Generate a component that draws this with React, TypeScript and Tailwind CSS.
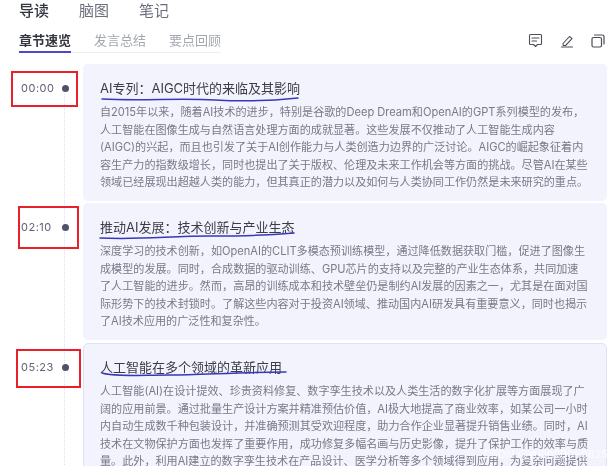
const FONT = "[font-family:Inter,'Noto_Sans_CJK_SC',sans-serif]";

const CHAPTERS = [
  {
    time: "00:00",
    title: "AI专列：AIGC时代的来临及其影响",
    lines: [
      "自2015年以来，随着AI技术的进步，特别是谷歌的Deep Dream和OpenAI的GPT系列模型的发布，",
      "人工智能在图像生成与自然语言处理方面的成就显著。这些发展不仅推动了人工智能生成内容",
      "(AIGC)的兴起，而且也引发了关于AI创作能力与人类创造力边界的广泛讨论。AIGC的崛起象征着内",
      "容生产力的指数级增长，同时也提出了关于版权、伦理及未来工作机会等方面的挑战。尽管AI在某些",
      "领域已经展现出超越人类的能力，但其真正的潜力以及如何与人类协同工作仍然是未来研究的重点。",
    ],
  },
  {
    time: "02:10",
    title: "推动AI发展：技术创新与产业生态",
    lines: [
      "深度学习的技术创新，如OpenAI的CLIT多模态预训练模型，通过降低数据获取门槛，促进了图像生",
      "成模型的发展。同时，合成数据的驱动训练、GPU芯片的支持以及完整的产业生态体系，共同加速",
      "了人工智能的进步。然而，高昂的训练成本和技术壁垒仍是制约AI发展的因素之一，尤其是在面对国",
      "际形势下的技术封锁时。了解这些内容对于投资AI领域、推动国内AI研发具有重要意义，同时也揭示",
      "了AI技术应用的广泛性和复杂性。",
    ],
  },
  {
    time: "05:23",
    title: "人工智能在多个领域的革新应用",
    lines: [
      "人工智能(AI)在设计提效、珍贵资料修复、数字孪生技术以及人类生活的数字化扩展等方面展现了广",
      "阔的应用前景。通过批量生产设计方案并精准预估价值，AI极大地提高了商业效率，如某公司一小时",
      "内自动生成数千种包装设计，并准确预测其受欢迎程度，助力合作企业显著提升销售业绩。同时，AI",
      "技术在文物保护方面也发挥了重要作用，成功修复多幅名画与历史影像，提升了保护工作的效率与质",
      "量。此外，利用AI建立的数字孪生技术在产品设计、医学分析等多个领域得到应用，为复杂问题提供",
    ],
  },
];

function CommentIcon() {
  return (
    <svg width="15" height="15" viewBox="0 0 15 15" fill="none" stroke="currentColor" strokeWidth="1.1" strokeLinejoin="round">
      <path d="M2.5 1.5h10a1 1 0 0 1 1 1v8a1 1 0 0 1-1 1H9.5L7.5 13.5 5.5 11.5h-3a1 1 0 0 1-1-1v-8a1 1 0 0 1 1-1Z" />
      <path d="M4 5h7M4 8h4.5" strokeLinecap="round" />
    </svg>
  );
}

function PenIcon() {
  return (
    <svg width="14" height="14" viewBox="0 0 14 14" fill="none" stroke="currentColor" strokeWidth="1.1" strokeLinejoin="round">
      <path d="M3 9.5 9.5 2.5l2.5 2.2-6.4 6.8H3.2Z" />
      <path d="M1.5 13h11" strokeLinecap="round" />
    </svg>
  );
}

function CopyIcon() {
  return (
    <svg width="14" height="14" viewBox="0 0 14 14" fill="none" stroke="currentColor" strokeWidth="1.2" strokeLinejoin="round">
      <rect x="1" y="3.5" width="9.5" height="9.5" rx="1.5" />
      <path d="M3.5 1h8a1.5 1.5 0 0 1 1.5 1.5V10" strokeLinecap="round" />
    </svg>
  );
}

export default function App() {
  return (
    <div className={`relative h-[466px] w-[609px] overflow-hidden bg-white blur-[0.4px] ${FONT}`}>
      {/* Top tabs */}
      <div className="flex h-[20px] items-center gap-[30px] pl-[19px] pt-[1px] text-[15px] leading-[20px] text-[#6b6f7b]">
        <span className="font-medium text-[#33363f]">导读</span>
        <span>脑图</span>
        <span>笔记</span>
      </div>

      {/* Sub tabs */}
      <div className="mt-[10px] flex h-[23px] items-start justify-between pr-[4px]">
        <div className="ml-[19px] flex w-[202px] gap-[23px] border-b border-[#eeeef2] text-[13px] leading-[20px] text-[#a4a7b0]">
          <span className="-mb-px h-[23px] border-b-[2px] border-[#4a4acb] font-semibold text-[#33363f]">章节速览</span>
          <span>发言总结</span>
          <span>要点回顾</span>
        </div>
        <div className="mt-[3px] flex items-center gap-[17px] text-[#4b4e57]">
          <CommentIcon />
          <PenIcon />
          <CopyIcon />
        </div>
      </div>

      {/* Timeline */}
      <div className="relative mt-[11px] flex flex-col gap-[2px]">
        <div className="absolute bottom-0 left-[64px] top-[30px] border-l border-dotted border-[#dddcf5]" />
        {CHAPTERS.map((chapter, index) => (
          <div key={chapter.time} className={`flex ${index === 2 ? "mt-px" : ""}`}>
            <div className="flex w-[83px] shrink-0 items-start">
              <div className="z-10 mt-[17px] flex w-[69px] items-center justify-between pl-[21px] text-[11px] leading-[14px] tracking-[0.5px] text-[#5f6272]">
                <span>{chapter.time}</span>
                <span className="h-[7px] w-[7px] rounded-full bg-[#50526b]" />
              </div>
            </div>
            <div
              className={`w-[524px] shrink-0 rounded-[5px] bg-[#f3f3fe] ${
                index === 2 ? "h-[180px] border border-[#dfdff8] pl-[16px] pt-[13px]" : "h-[137px] pl-[17px] pt-[14px]"
              }`}
            >
              <h3 className="text-[13px] leading-[20px] text-[#3a3c47]">{chapter.title}</h3>
              <div className="mt-[6px] text-[11.1px] leading-[17.5px] text-[#787a86]">
                {chapter.lines.map((line) => (
                  <div key={line} className="whitespace-nowrap">
                    {line}
                  </div>
                ))}
              </div>
            </div>
          </div>
        ))}
      </div>

      {/* Hand-drawn annotations */}
      <div className="absolute left-[11px] top-[71px] h-[36px] w-[67px] border-[2px] border-[#e8202a]" />
      <div className="absolute left-[18px] top-[206px] h-[43px] w-[61px] border-[2px] border-[#e8202a]" />
      <div className="absolute left-[16px] top-[349px] h-[39px] w-[65px] border-[2px] border-[#e8202a]" />
      <svg className="absolute left-0 top-0" width="609" height="466" fill="none" stroke="#3838b8" strokeWidth="1.5" strokeLinecap="round">
        <path d="M102 99 C140 101 180 98 215 100 S280 100 298 98" />
        <path d="M100 238 C140 240 170 236 210 236 S270 235 294 233" />
        <path d="M102 373 C115 377 140 375 170 375 S240 372 286 372" />
      </svg>

      {/* Watermark */}
      <span className="absolute left-[483px] top-[447px] text-[11px] leading-[14px] text-white/80">CSDN @yuan20050825</span>
    </div>
  );
}
